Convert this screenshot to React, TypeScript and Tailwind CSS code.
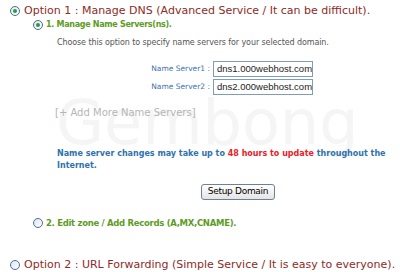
export default function App() {
  return (
    <div
      className="relative w-[400px] h-[272px] overflow-hidden bg-white"
      style={{ fontFamily: "'DejaVu Sans', Verdana, sans-serif" }}
    >
      <div className="absolute left-[56px] top-[92px] text-[62px] leading-none text-[#f5f5f5] select-none">
        Gembong
      </div>

      <div className="relative flex flex-col pt-[4px]">
        <label className="flex items-center gap-[4px] pl-[10px] h-[14px]">
          <Radio checked />
          <span className="text-[11px] text-[#8d2b27] whitespace-nowrap">
            Option 1 : Manage DNS (Advanced Service / It can be difficult).
          </span>
        </label>

        <label className="flex items-center gap-[3px] pl-[33px] h-[14px]">
          <Radio checked />
          <span className="text-[8px] font-bold text-[#5d9b25] whitespace-nowrap tracking-[-0.3px]">
            1. Manage Name Servers(ns).
          </span>
        </label>

        <p className="pl-[57px] mt-[5px] text-[8px] leading-[12px] text-[#555] whitespace-nowrap tracking-[-0.1px]">
          Choose this option to specify name servers for your selected domain.
        </p>

        <div className="flex flex-col gap-[2px] mt-[12px] pl-[147px]">
          <div className="flex items-center gap-[3px]">
            <span className="w-[63px] text-right text-[7.5px] text-[#3b73ad] whitespace-nowrap">
              Name Server1 :
            </span>
            <div
              className="w-[100px] h-[16px] border border-[#7f9db9] flex items-center px-[3px] text-[9.5px] text-[#222] whitespace-nowrap overflow-hidden"
              style={{ fontFamily: "'Liberation Sans', Arial, sans-serif" }}
            >
              dns1.000webhost.com
            </div>
          </div>
          <div className="flex items-center gap-[3px]">
            <span className="w-[63px] text-right text-[7.5px] text-[#3b73ad] whitespace-nowrap">
              Name Server2 :
            </span>
            <div
              className="w-[100px] h-[16px] border border-[#7f9db9] flex items-center px-[3px] text-[9.5px] text-[#222] whitespace-nowrap overflow-hidden"
              style={{ fontFamily: "'Liberation Sans', Arial, sans-serif" }}
            >
              dns2.000webhost.com<span className="w-px h-[11px] bg-black" />
            </div>
          </div>
        </div>

        <p className="pl-[55px] mt-[12px] text-[10px] leading-[12px] text-[#b5b5b5] whitespace-nowrap">
          [+ Add More Name Servers]
        </p>

        <p className="pl-[57px] mt-[29px] text-[8px] leading-[12px] font-bold text-[#2f72ad] whitespace-nowrap">
          Name server changes may take up to{" "}
          <span className="text-[#ea2127]">48 hours to update</span> throughout
          the
          <br />
          Internet.
        </p>

        <div className="flex justify-center pl-[76px] mt-[12px]">
          <button className="h-[16px] px-[6px] border border-[#6f7f95] rounded-[3px] bg-gradient-to-b from-white to-[#e4e4e4] text-[9px] text-black tracking-[-0.3px]">
            Setup Domain
          </button>
        </div>

        <label className="flex items-center gap-[3px] pl-[33px] mt-[16px] h-[14px]">
          <Radio />
          <span className="text-[8.5px] font-bold text-[#5d9b25] whitespace-nowrap tracking-[-0.3px]">
            2. Edit zone / Add Records (A,MX,CNAME).
          </span>
        </label>

        <label className="flex items-center gap-[4px] pl-[10px] mt-[28px] h-[14px]">
          <Radio />
          <span className="text-[11px] text-[#8d2b27] whitespace-nowrap">
            Option 2 : URL Forwarding (Simple Service / It is easy to everyone).
          </span>
        </label>
      </div>
    </div>
  );
}

function Radio({ checked }: { checked?: boolean }) {
  return (
    <span className="w-[10px] h-[10px] rounded-full border border-[#4b6e95] bg-gradient-to-br from-[#dfe6ee] to-white flex items-center justify-center shrink-0">
      {checked && <span className="w-[4px] h-[4px] rounded-full bg-[#2b9a3a]" />}
    </span>
  );
}
